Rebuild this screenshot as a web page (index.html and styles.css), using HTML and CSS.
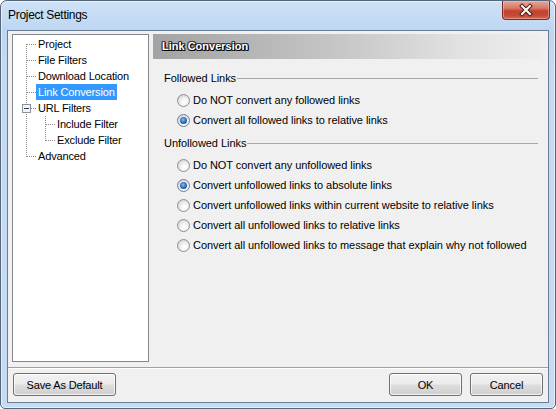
FILE: index.html
```html
<!DOCTYPE html>
<html>
<head>
<meta charset="utf-8">
<title>Project Settings</title>
<link rel="stylesheet" href="styles.css">
</head>
<body>
<div class="window">
  <div class="titlebar">
    <span class="title">Project Settings</span>
    <div class="close">
      <svg width="18" height="14" viewBox="0 0 18 14">
        <path d="M5 3 L13 11 M13 3 L5 11" stroke="#4a1a14" stroke-width="4" stroke-linecap="square" fill="none"/>
        <path d="M5 3 L13 11 M13 3 L5 11" stroke="#ffffff" stroke-width="2" stroke-linecap="square" fill="none"/>
      </svg>
    </div>
  </div>
  <div class="client">
    <div class="main">
      <div class="tree">
        <svg class="tree-lines" width="60" height="130" viewBox="0 0 60 130">
          <g stroke="#8a8a8a" stroke-width="1" stroke-dasharray="1 1" fill="none">
            <path d="M13.5 9 V122"/>
            <path d="M14 9.5 H24"/>
            <path d="M14 25.5 H24"/>
            <path d="M14 41.5 H24"/>
            <path d="M14 57.5 H24"/>
            <path d="M18 73.5 H24"/>
            <path d="M14 121.5 H24"/>
            <path d="M32.5 81 V106"/>
            <path d="M33 89.5 H43"/>
            <path d="M33 105.5 H43"/>
          </g>
          <rect x="9.5" y="69.5" width="8" height="8" fill="#f4f4f4" stroke="#919191"/>
          <path d="M11 73.5 H16" stroke="#1e3a6e" stroke-width="1"/>
        </svg>
        <div class="node"><span class="label">Project</span></div>
        <div class="node"><span class="label">File Filters</span></div>
        <div class="node"><span class="label">Download Location</span></div>
        <div class="node"><span class="label selected">Link Conversion</span></div>
        <div class="node"><span class="label">URL Filters</span></div>
        <div class="node child"><span class="label">Include Filter</span></div>
        <div class="node child"><span class="label">Exclude Filter</span></div>
        <div class="node"><span class="label">Advanced</span></div>
      </div>
      <div class="panel">
        <div class="panel-header">Link Conversion</div>
        <div class="group-title first"><span>Followed Links</span></div>
        <div class="options">
          <label class="option"><input type="radio" name="followed"><span>Do NOT convert any followed links</span></label>
          <label class="option"><input type="radio" name="followed" checked><span>Convert all followed links to relative links</span></label>
        </div>
        <div class="group-title"><span>Unfollowed Links</span></div>
        <div class="options">
          <label class="option"><input type="radio" name="unfollowed"><span>Do NOT convert any unfollowed links</span></label>
          <label class="option"><input type="radio" name="unfollowed" checked><span>Convert unfollowed links to absolute links</span></label>
          <label class="option"><input type="radio" name="unfollowed"><span>Convert unfollowed links within current website to relative links</span></label>
          <label class="option"><input type="radio" name="unfollowed"><span>Convert all unfollowed links to relative links</span></label>
          <label class="option"><input type="radio" name="unfollowed"><span>Convert all unfollowed links to message that explain why not followed</span></label>
        </div>
      </div>
    </div>
    <div class="sep"></div>
    <div class="buttons">
      <button class="btn btn-default">Save As Default</button>
      <div class="spacer"></div>
      <button class="btn">OK</button>
      <button class="btn">Cancel</button>
    </div>
  </div>
</div>
</body>
</html>
```
FILE: styles.css
```css
html, body {
  margin: 0;
  padding: 0;
  background: #ffffff;
}
body {
  font-family: "Liberation Sans", Arial, sans-serif;
  font-size: 11px;
  color: #000;
}
.window {
  width: 556px;
  height: 409px;
  box-sizing: border-box;
  border: 1px solid #55657a;
  border-radius: 7px 7px 5px 5px;
  background: linear-gradient(180deg, #cfe3f7 0px, #bdd6f1 29px, #c3d9f0 60px, #c7dcf2 100%);
  box-shadow: inset 0 0 0 1px rgba(255,255,255,0.55);
  display: flex;
  flex-direction: column;
  overflow: hidden;
}
.titlebar {
  height: 29px;
  display: flex;
  align-items: flex-start;
  flex: none;
}
.title {
  padding-left: 7px;
  line-height: 29px;
  font-size: 12px;
  letter-spacing: -0.3px;
  color: #000;
}
.close {
  margin-left: auto;
  margin-right: 5px;
  width: 48px;
  height: 19px;
  box-sizing: border-box;
  border: 1px solid #7b2b22;
  border-top: none;
  border-radius: 0 0 4px 4px;
  background: linear-gradient(180deg, #e8a596 0%, #d87a68 40%, #c2432e 55%, #c54a35 80%, #d46a52 100%);
  box-shadow: inset 0 0 0 1px rgba(255,200,190,0.45);
  display: flex;
  align-items: center;
  justify-content: center;
}
.client {
  margin: 0 6px 5px 6px;
  height: 373px;
  box-sizing: border-box;
  border: 1px solid #6a7d94;
  background: #f0f0f0;
  padding: 3px 0 6px 0;
  display: flex;
  flex-direction: column;
}
.main {
  height: 328px;
  display: flex;
  gap: 4px;
  padding-left: 4px;
}
.tree {
  position: relative;
  width: 137px;
  height: 328px;
  box-sizing: border-box;
  border: 1px solid #828790;
  background: #fff;
  padding-top: 1px;
}
.tree-lines {
  position: absolute;
  left: 0;
  top: 0;
}
.node {
  height: 16px;
  line-height: 16px;
  padding-left: 23px;
  white-space: nowrap;
  letter-spacing: -0.15px;
}
.node.child {
  padding-left: 42px;
}
.label {
  display: inline-block;
  padding: 0 2px;
}
.label.selected {
  background: #3399ff;
  color: #fff;
}
.panel {
  width: 388px;
  display: flex;
  flex-direction: column;
}
.panel-header {
  height: 25px;
  line-height: 25px;
  padding-left: 9px;
  background: linear-gradient(90deg, #a3a3a3 0%, #c4c4c4 45%, #e2e2e2 80%, #eeeeee 100%);
  color: #fff;
  font-weight: bold;
  letter-spacing: 0;
  text-shadow: 1px 1px 0 #000, -1px 0 0 #333, 0 -1px 0 #333, 1px 0 0 #111, 0 1px 0 #111, -1px -1px 0 #555, 1px -1px 0 #444, -1px 1px 0 #444;
}
.group-title {
  display: flex;
  align-items: center;
  height: 16px;
  line-height: 16px;
  padding-left: 11px;
  margin-top: 5px;
  margin-right: 3px;
  letter-spacing: -0.05px;
}
.group-title.first {
  margin-top: 11px;
}
.group-title::after {
  content: "";
  flex: 1;
  height: 1px;
  background: #a8a8a8;
  margin-left: 1px;
}
.options {
  margin-top: 4px;
  padding-left: 24px;
}
.option {
  display: flex;
  align-items: center;
  height: 20px;
  white-space: nowrap;
  letter-spacing: -0.05px;
}
.option input {
  appearance: none;
  -webkit-appearance: none;
  margin: 0 3px 0 0;
  width: 13px;
  height: 13px;
  box-sizing: border-box;
  border: 1px solid #8e8f8f;
  border-radius: 50%;
  background: radial-gradient(circle at 60% 65%, #ffffff 0%, #f4f4f4 35%, #d8d8d8 75%, #cfcfcf 100%);
  position: relative;
  flex: none;
}
.option input:checked {
  border-color: #6d7f94;
}
.option input:checked::after {
  content: "";
  position: absolute;
  left: 2px;
  top: 2px;
  width: 7px;
  height: 7px;
  border-radius: 50%;
  background: radial-gradient(circle at 45% 40%, #8ec3f5 0%, #3d7cc4 40%, #1a4a86 80%, #143b6e 100%);
}
.sep {
  margin-top: 5px;
  border-top: 1px solid #a0a0a0;
  border-bottom: 1px solid #ffffff;
  height: 0;
}
.buttons {
  margin-top: 4px;
  display: flex;
  padding: 0 5px;
  gap: 8px;
}
.spacer {
  flex: 1;
}
.btn {
  width: 73px;
  height: 23px;
  box-sizing: border-box;
  border: 1px solid #707070;
  border-radius: 3px;
  background: linear-gradient(180deg, #f2f2f2 0%, #ebebeb 48%, #dddddd 52%, #cfcfcf 100%);
  box-shadow: inset 0 0 0 1px rgba(255,255,255,0.7);
  font-family: "Liberation Sans", Arial, sans-serif;
  font-size: 11px;
  letter-spacing: -0.15px;
  color: #000;
  padding: 0;
}
.btn-default {
  width: 103px;
}
```
